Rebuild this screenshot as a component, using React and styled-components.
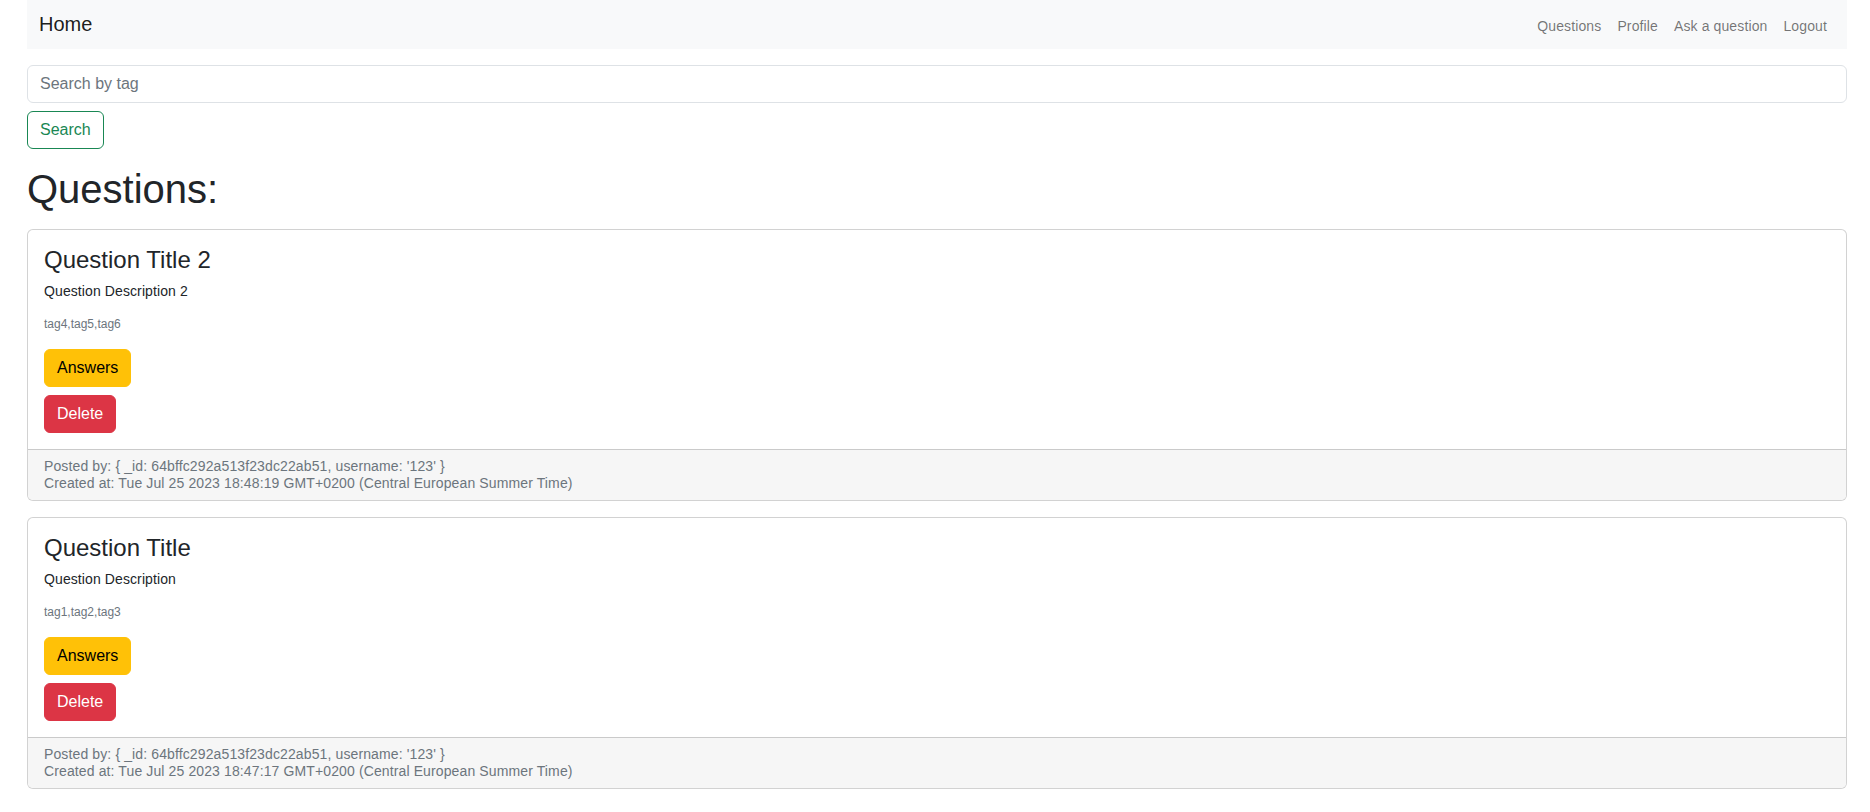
import React from "react";
import styled, { createGlobalStyle } from "styled-components";

const GlobalStyle = createGlobalStyle`
  * { box-sizing: border-box; }
  body {
    margin: 0;
    background: #fff;
    color: #212529;
    font-family: "Liberation Sans", Arial, sans-serif;
    line-height: normal;
  }
`;

const Page = styled.div`
  padding: 0 23px 0 27px;
`;

const Navbar = styled.nav`
  display: flex;
  align-items: center;
  justify-content: space-between;
  height: 49px;
  padding: 8px 12px;
  background: #f8f9fa;
`;

const Brand = styled.a`
  font-size: 20px;
  padding: 5px 0;
  color: rgba(0, 0, 0, 0.9);
  text-decoration: none;
  cursor: pointer;
`;

const NavLinks = styled.div`
  display: flex;
  align-items: center;
  margin-top: 2px;
`;

const NavLink = styled.a`
  padding: 8px;
  font-size: 14px;
  letter-spacing: 0.12px;
  color: rgba(0, 0, 0, 0.55);
  text-decoration: none;
  cursor: pointer;
`;

const SearchForm = styled.form`
  margin-top: 16px;
  display: flex;
  flex-direction: column;
  align-items: flex-start;
  gap: 8px;
`;

const SearchInput = styled.input`
  width: 100%;
  height: 38px;
  padding: 6px 12px;
  font-family: inherit;
  font-size: 16px;
  line-height: 1.5;
  color: #212529;
  border: 1px solid #dee2e6;
  border-radius: 6px;
  outline: none;
  &::placeholder { color: #6c757d; }
`;

const Button = styled.button`
  height: 38px;
  padding: 6px 12px;
  font-family: inherit;
  font-size: 16px;
  line-height: 1.5;
  border-radius: 6px;
  cursor: pointer;
  border: 1px solid ${(p) => p.$border};
  background: ${(p) => p.$bg};
  color: ${(p) => p.$color};
`;

const Heading = styled.h1`
  margin: 17px 0 17px;
  font-size: 40px;
  font-weight: 500;
  line-height: 46px;
  color: #212529;
`;

const CardList = styled.div`
  display: flex;
  flex-direction: column;
  gap: 16px;
`;

const Card = styled.div`
  border: 1px solid rgba(0, 0, 0, 0.175);
  border-radius: 6px;
  overflow: hidden;
  background: #fff;
`;

const CardBody = styled.div`
  padding: 16px;
  display: flex;
  flex-direction: column;
  align-items: flex-start;
`;

const Title = styled.h4`
  margin: 0 0 9px;
  font-size: 24px;
  font-weight: 500;
  line-height: 28px;
  color: #212529;
`;

const Description = styled.p`
  margin: 0 0 18px;
  font-size: 14px;
  line-height: 16px;
  letter-spacing: 0.1px;
  color: #212529;
`;

const Tags = styled.p`
  margin: 0 0 18px;
  font-size: 12px;
  line-height: 14px;
  color: #6c757d;
`;

const Actions = styled.div`
  display: flex;
  flex-direction: column;
  align-items: flex-start;
  gap: 8px;
`;

const CardFooter = styled.div`
  padding: 8px 16px;
  border-top: 1px solid rgba(0, 0, 0, 0.175);
  background: #f6f6f6;
  color: #6c757d;
  font-size: 14px;
  line-height: 17px;
  letter-spacing: 0.12px;
`;

const questions = [
  {
    title: "Question Title 2",
    description: "Question Description 2",
    tags: "tag4,tag5,tag6",
    created: "Tue Jul 25 2023 18:48:19 GMT+0200 (Central European Summer Time)",
  },
  {
    title: "Question Title",
    description: "Question Description",
    tags: "tag1,tag2,tag3",
    created: "Tue Jul 25 2023 18:47:17 GMT+0200 (Central European Summer Time)",
  },
];

export default function App() {
  return (
    <>
      <GlobalStyle />
      <Page>
        <Navbar>
          <Brand>Home</Brand>
          <NavLinks>
            <NavLink>Questions</NavLink>
            <NavLink>Profile</NavLink>
            <NavLink>Ask a question</NavLink>
            <NavLink>Logout</NavLink>
          </NavLinks>
        </Navbar>
        <SearchForm onSubmit={(e) => e.preventDefault()}>
          <SearchInput placeholder="Search by tag" />
          <Button type="submit" $border="#198754" $bg="transparent" $color="#198754">
            Search
          </Button>
        </SearchForm>
        <Heading>Questions:</Heading>
        <CardList>
          {questions.map((q) => (
            <Card key={q.title}>
              <CardBody>
                <Title>{q.title}</Title>
                <Description>{q.description}</Description>
                <Tags>{q.tags}</Tags>
                <Actions>
                  <Button $border="#ffc107" $bg="#ffc107" $color="#000">
                    Answers
                  </Button>
                  <Button $border="#dc3545" $bg="#dc3545" $color="#fff">
                    Delete
                  </Button>
                </Actions>
              </CardBody>
              <CardFooter>
                <div>Posted by: {"{"} _id: 64bffc292a513f23dc22ab51, username: '123' {"}"}</div>
                <div>Created at: {q.created}</div>
              </CardFooter>
            </Card>
          ))}
        </CardList>
      </Page>
    </>
  );
}
